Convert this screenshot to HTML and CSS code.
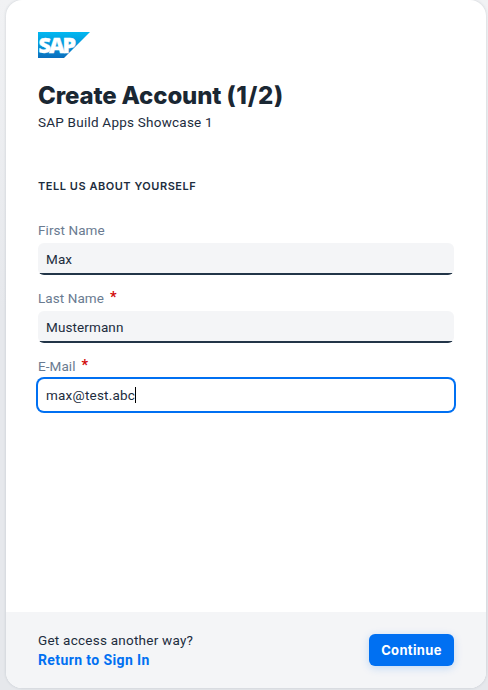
FILE: index.html
```html
<!DOCTYPE html>
<html lang="en">
<head>
<meta charset="utf-8">
<title>Create Account</title>
<link rel="stylesheet" href="styles.css">
</head>
<body>
<main class="card">
  <section class="content">
    <svg class="logo" viewBox="0 0 52 26" role="img" aria-label="SAP">
      <defs><linearGradient id="sky" x1="0" y1="0" x2="0" y2="1"><stop offset="0" stop-color="#00b8f1"/><stop offset=".5" stop-color="#0795d9"/><stop offset="1" stop-color="#0a6ebd"/></linearGradient></defs>
      <path d="M0 0H52L26 26H0Z" fill="url(#sky)"/>
      <text class="logo-text" x="0.6" y="20.8" textLength="37.5" lengthAdjust="spacing">SAP</text>
    </svg>
    <h1 class="title"><span>Create Account <span class="step">(1/2)</span></span></h1>
    <p class="subtitle"><span>SAP Build Apps Showcase 1</span></p>
    <h2 class="section-title"><span>TELL US ABOUT YOURSELF</span></h2>
    <form class="form">
      <div class="field"><div class="label"><span>First Name</span></div><div class="input"><span>Max</span></div></div>
      <div class="field"><div class="label"><span>Last Name</span><b class="star">*</b></div><div class="input"><span>Mustermann</span></div></div>
      <div class="field"><div class="label"><span>E-Mail</span><b class="star">*</b></div><div class="input focused"><span>max@test.abc</span><i class="caret"></i></div></div>
    </form>
  </section>
  <footer class="footer">
    <div class="signin"><span class="question">Get access another way?</span><a class="link">Return to Sign In</a></div>
    <button class="button" type="button">Continue</button>
  </footer>
</main>
</body>
</html>
```
FILE: styles.css
```css
* { box-sizing: border-box; }
body {
  margin: 0;
  height: 690px;
  padding: 0 2px 2px 6px;
  overflow: hidden;
  background: linear-gradient(#f1f2f4, #e6e8ec 45%, #e6e8ec);
  color: #1d2d3e;
  font: 13.5px/20px Roboto, sans-serif;
}
.card {
  height: 688px;
  display: flex;
  flex-direction: column;
  border-radius: 16px;
  overflow: hidden;
  background: #fff;
  box-shadow: 0 0 3px rgba(34, 53, 72, .18);
}
.content { flex: 1; padding: 32px 32px 0; }
.logo { display: block; width: 52px; height: 26px; overflow: visible; }
.logo-text { font: 800 21.5px "Open Sans", sans-serif; fill: #fff; stroke: #fff; stroke-width: .4px; }
.title { margin: 22px 0 0; color: #1a2733; font: 800 24px/32px Inter, sans-serif; letter-spacing: -.15px; }
.step { letter-spacing: .75px; }
.subtitle { margin: 0; letter-spacing: .23px; }
.section-title { margin: 44px 0 0; font: 600 11px/20px Inter, sans-serif; letter-spacing: .53px; }
.form { margin-top: 24px; }
.field { height: 68px; }
.label { height: 23px; display: flex; gap: 6px; color: #6a7b91; letter-spacing: .07px; }
.star { color: #d20a0a; font-size: 14.5px; }
.input {
  height: 32px;
  display: flex;
  align-items: center;
  padding: 0 8px;
  border-radius: 6px;
  background: linear-gradient(#223548, #223548) bottom / 100% 2px no-repeat #f4f5f7;
  letter-spacing: .1px;
}
.focused { background: #fff; box-shadow: 0 0 0 2px #0070f2; letter-spacing: .22px; }
.caret { width: 1px; height: 16px; background: #000; }
.footer {
  height: 76px;
  display: flex;
  align-items: center;
  justify-content: space-between;
  padding: 0 32px;
  background: #f4f5f7;
}
.signin { display: flex; flex-direction: column; letter-spacing: .24px; }
.link { color: #0070f2; font-size: 14px; font-weight: 700; letter-spacing: .39px; }
.button {
  width: 85px;
  height: 32px;
  padding: 0;
  border: 0;
  border-radius: 6px;
  background: #0070f2;
  box-shadow: 0 2px 8px rgba(0, 112, 242, .22);
  color: #fff;
  font: 700 13px Inter, sans-serif;
  letter-spacing: .35px;
}
```
